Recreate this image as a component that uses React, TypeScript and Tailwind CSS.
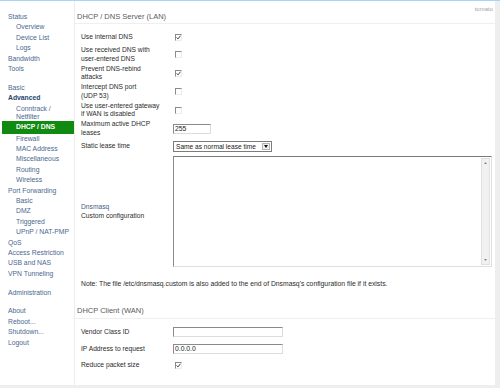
import React from 'react';

type NavItem = { t: string; lvl?: number; bold?: boolean; active?: boolean; gap?: boolean; two?: [string, string] };

const nav: NavItem[] = [
  { t: 'Status' },
  { t: 'Overview', lvl: 1 },
  { t: 'Device List', lvl: 1 },
  { t: 'Logs', lvl: 1 },
  { t: 'Bandwidth' },
  { t: 'Tools' },
  { t: '', gap: true },
  { t: 'Basic' },
  { t: 'Advanced', bold: true },
  { t: '', lvl: 1, two: ['Conntrack /', 'Netfilter'] },
  { t: 'DHCP / DNS', active: true },
  { t: 'Firewall', lvl: 1 },
  { t: 'MAC Address', lvl: 1 },
  { t: 'Miscellaneous', lvl: 1 },
  { t: 'Routing', lvl: 1 },
  { t: 'Wireless', lvl: 1 },
  { t: 'Port Forwarding' },
  { t: 'Basic', lvl: 1 },
  { t: 'DMZ', lvl: 1 },
  { t: 'Triggered', lvl: 1 },
  { t: 'UPnP / NAT-PMP', lvl: 1 },
  { t: 'QoS' },
  { t: 'Access Restriction' },
  { t: 'USB and NAS' },
  { t: 'VPN Tunneling' },
  { t: '', gap: true },
  { t: 'Administration' },
  { t: '', gap: true },
  { t: 'About' },
  { t: 'Reboot...' },
  { t: 'Shutdown...' },
  { t: 'Logout' },
];

const Sidebar = () => (
  <div className="w-[75px] shrink-0 border-r border-[#ececec] pt-[11.1px] text-[6.8px] text-[#4a6890]">
    {nav.map((n, i) => {
      if (n.gap) return <div key={i} className="h-[8.4px]" />;
      if (n.two)
        return (
          <div key={i} className="pl-[16px] pt-[1.6px] leading-[8px] h-[17.6px]">
            <div>{n.two[0]}</div>
            <div>{n.two[1]}</div>
          </div>
        );
      if (n.active)
        return (
          <div key={i} className="ml-[2px] h-[12.5px] leading-[12.5px] bg-[#108a10] pl-[14px] font-bold text-white">
            {n.t}
          </div>
        );
      return (
        <div
          key={i}
          className={`h-[10.4px] leading-[10.4px] whitespace-nowrap ${n.lvl ? 'pl-[16px]' : 'pl-[8px]'} ${n.bold ? 'font-bold text-[#24466e]' : ''}`}
        >
          {n.t}
        </div>
      );
    })}
  </div>
);

const Check = ({ on }: { on?: boolean }) => (
  <span className="ml-[2px] relative inline-flex items-center justify-center w-[7px] h-[7px] bg-white border border-t-[#8a8a8a] border-l-[#8a8a8a] border-r-[#ececec] border-b-[#ececec]">
    {on && (
      <svg width="5" height="5" viewBox="0 0 5 5">
        <path d="M0.6 2.4 L2 3.9 L4.5 0.7" fill="none" stroke="#333" strokeWidth="0.9" />
      </svg>
    )}
  </span>
);

const TextBox = ({ w, value }: { w: string; value?: string }) => (
  <input
    readOnly
    value={value ?? ''}
    className={`${w} h-[10px] px-[1px] text-[6.8px] leading-[8px] text-[#222] bg-white border border-t-[#8a8a8a] border-l-[#8a8a8a] border-r-[#dcdcdc] border-b-[#dcdcdc] outline-none`}
  />
);

const Row = ({ label, two, children }: { label?: string; two?: [string, string]; children: React.ReactNode }) => (
  <div className={`grid grid-cols-[92px_1fr] items-center pl-[6px] ${two ? 'h-[18.5px]' : 'h-[16.5px]'}`}>
    <div className="leading-[8.5px] text-[#2b2b2b]">
      {two ? (
        <>
          <div>{two[0]}</div>
          <div>{two[1]}</div>
        </>
      ) : (
        label
      )}
    </div>
    <div className="flex items-center">{children}</div>
  </div>
);

export default function App() {
  return (
    <div className="w-[500px] h-[388px] overflow-hidden bg-[#eeeeee] font-['Liberation_Sans',Arial,sans-serif]">
      <div className="h-px bg-[#a8d5f4]" />
      <div className="flex w-[495px] h-[384px] bg-white">
        <Sidebar />
        <div className="flex-1 flex flex-col text-[6.7px]">
          {/* LAN section header */}
          <div className="h-[23px] flex justify-between border-b border-[#efefef]">
            <div className="pl-[2px] pt-[10.5px] leading-[9px] text-[7.5px] text-[#5a5a5a]">DHCP / DNS Server (LAN)</div>
            <div className="pr-[2px] pt-[4.5px] leading-[7px] text-[6px] text-[#a4a4a4]">tomato</div>
          </div>

          <div className="pt-[5px]">
            <Row label="Use internal DNS">
              <Check on />
            </Row>
            <Row two={['Use received DNS with', 'user-entered DNS']}>
              <Check />
            </Row>
            <Row two={['Prevent DNS-rebind', 'attacks']}>
              <Check on />
            </Row>
            <Row two={['Intercept DNS port', '(UDP 53)']}>
              <Check />
            </Row>
            <Row two={['Use user-entered gateway', 'if WAN is disabled']}>
              <Check />
            </Row>
            <Row two={['Maximum active DHCP', 'leases']}>
              <TextBox w="w-[38px]" value="255" />
            </Row>
            <Row label="Static lease time">
              <div className="flex h-[11px] w-[99px] border border-[#7c7c7c] bg-white">
                <div className="flex-1 pl-[2px] text-[6.6px] leading-[9px] text-[#222] whitespace-nowrap overflow-hidden">Same as normal lease time</div>
                <div className="w-[8px] my-[1px] mr-[1px] flex items-center justify-center bg-[#efefef] border border-[#b5b5b5]">
                  <svg width="4" height="3" viewBox="0 0 4 3">
                    <path d="M0 0 H4 L2 3 Z" fill="#111" />
                  </svg>
                </div>
              </div>
            </Row>
            <div className="grid grid-cols-[92px_1fr] items-center pl-[6px] pt-[1.5px] pb-[2px]">
              <div className="leading-[8.5px]">
                <div className="text-[#3f5d88]">Dnsmasq</div>
                <div className="text-[#2b2b2b]">Custom configuration</div>
              </div>
              <div className="flex h-[111px] mr-[3px] bg-white border border-t-[#7a7a7a] border-l-[#8a8a8a] border-r-[#dedede] border-b-[#dedede]">
                <div className="flex-1" />
                <div className="w-[9px] my-[1px] mr-[1px] flex flex-col justify-between items-center bg-[#f1f1f1] border border-[#e0e0e0] py-[3px]">
                  <svg width="3" height="2" viewBox="0 0 3 2">
                    <path d="M0 2 L1.5 0 L3 2 Z" fill="#888" />
                  </svg>
                  <svg width="3" height="2" viewBox="0 0 3 2">
                    <path d="M0 0 H3 L1.5 2 Z" fill="#888" />
                  </svg>
                </div>
              </div>
            </div>
          </div>

          <div className="pl-[6px] mt-[9.5px] leading-[9px] text-[6.8px] text-[#2b2b2b] whitespace-nowrap">
            Note: The file /etc/dnsmasq.custom is also added to the end of Dnsmasq's configuration file if it exists.
          </div>

          {/* WAN section */}
          <div className="mt-[18.7px] pb-[2.5px] border-b border-[#efefef]">
            <div className="pl-[2px] leading-[9px] text-[7.5px] text-[#5a5a5a]">DHCP Client (WAN)</div>
          </div>
          <div className="pt-[5.5px]">
            <Row label="Vendor Class ID">
              <TextBox w="w-[110px]" />
            </Row>
            <Row label="IP Address to request">
              <TextBox w="w-[110px]" value="0.0.0.0" />
            </Row>
            <Row label="Reduce packet size">
              <Check on />
            </Row>
          </div>
        </div>
      </div>
    </div>
  );
}
